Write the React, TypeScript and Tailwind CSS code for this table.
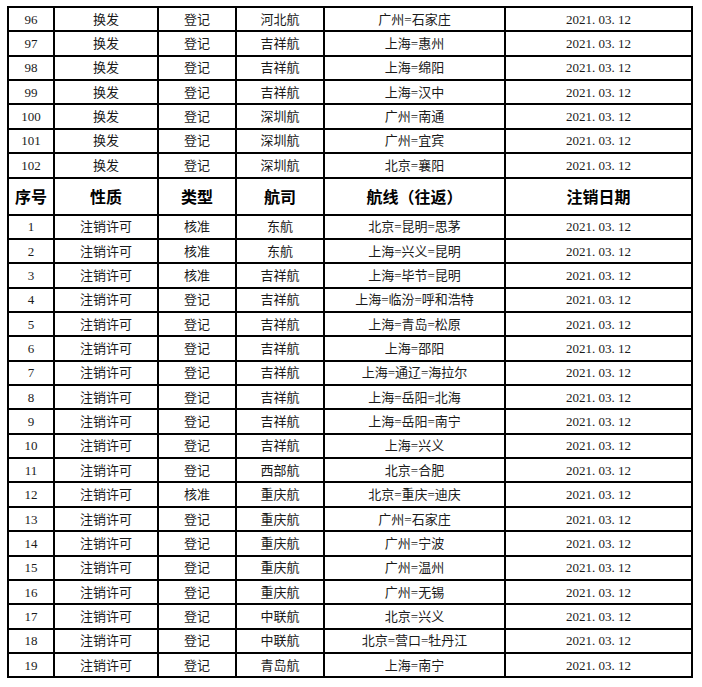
import React from "react";

const topRows = [
  ["96", "换发", "登记", "河北航", "广州=石家庄"],
  ["97", "换发", "登记", "吉祥航", "上海=惠州"],
  ["98", "换发", "登记", "吉祥航", "上海=绵阳"],
  ["99", "换发", "登记", "吉祥航", "上海=汉中"],
  ["100", "换发", "登记", "深圳航", "广州=南通"],
  ["101", "换发", "登记", "深圳航", "广州=宜宾"],
  ["102", "换发", "登记", "深圳航", "北京=襄阳"],
];

const bottomRows = [
  ["1", "注销许可", "核准", "东航", "北京=昆明=思茅"],
  ["2", "注销许可", "核准", "东航", "上海=兴义=昆明"],
  ["3", "注销许可", "核准", "吉祥航", "上海=毕节=昆明"],
  ["4", "注销许可", "登记", "吉祥航", "上海=临汾=呼和浩特"],
  ["5", "注销许可", "登记", "吉祥航", "上海=青岛=松原"],
  ["6", "注销许可", "登记", "吉祥航", "上海=邵阳"],
  ["7", "注销许可", "登记", "吉祥航", "上海=通辽=海拉尔"],
  ["8", "注销许可", "登记", "吉祥航", "上海=岳阳=北海"],
  ["9", "注销许可", "登记", "吉祥航", "上海=岳阳=南宁"],
  ["10", "注销许可", "登记", "吉祥航", "上海=兴义"],
  ["11", "注销许可", "登记", "西部航", "北京=合肥"],
  ["12", "注销许可", "核准", "重庆航", "北京=重庆=迪庆"],
  ["13", "注销许可", "登记", "重庆航", "广州=石家庄"],
  ["14", "注销许可", "登记", "重庆航", "广州=宁波"],
  ["15", "注销许可", "登记", "重庆航", "广州=温州"],
  ["16", "注销许可", "登记", "重庆航", "广州=无锡"],
  ["17", "注销许可", "登记", "中联航", "北京=兴义"],
  ["18", "注销许可", "登记", "中联航", "北京=营口=牡丹江"],
  ["19", "注销许可", "登记", "青岛航", "上海=南宁"],
];

const headers = ["序号", "性质", "类型", "航司", "航线（往返）", "注销日期"];

const DataRow = ({ row }: { row: string[] }) => (
  <tr>
    {[...row, "2021. 03. 12"].map((cell, i) => (
      <td
        key={i}
        className="h-[24.37px] border-2 border-black p-0 text-center align-middle text-[13px] leading-none text-[#1a1a1a]"
      >
        {cell}
      </td>
    ))}
  </tr>
);

export default function App() {
  return (
    <div className="min-h-[687px] w-[702px] bg-white pt-[6px] pl-[7px]">
      <table
        className="table-fixed border-collapse w-[686px]"
        style={{ fontFamily: '"Liberation Serif", "Noto Sans CJK SC", serif' }}
      >
        <colgroup>
          <col className="w-[46px]" />
          <col className="w-[104px]" />
          <col className="w-[78px]" />
          <col className="w-[88px]" />
          <col className="w-[181px]" />
          <col className="w-[187px]" />
        </colgroup>
        <tbody>
          {topRows.map((r) => (
            <DataRow key={"t" + r[0]} row={r} />
          ))}
          <tr>
            {headers.map((h) => (
              <td
                key={h}
                className="h-[37px] border-2 border-black p-0 text-center align-middle text-[16px] font-bold leading-none text-black"
                style={{ fontFamily: '"Noto Sans CJK SC", sans-serif' }}
              >
                {h}
              </td>
            ))}
          </tr>
          {bottomRows.map((r) => (
            <DataRow key={"b" + r[0]} row={r} />
          ))}
        </tbody>
      </table>
    </div>
  );
}
